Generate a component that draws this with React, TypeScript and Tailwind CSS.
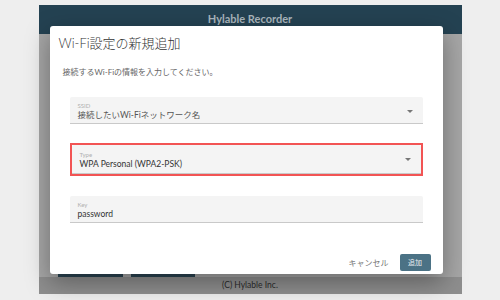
const font = "font-['Lato','Noto_Sans_CJK_JP',sans-serif]";

function Field({
  label,
  value,
  select,
  dark,
  tall,
}: {
  label: string;
  value: string;
  select?: boolean;
  dark?: boolean;
  tall?: boolean;
}) {
  return (
    <div
      className={`relative ${tall ? "h-[29px]" : "h-[27px]"} bg-[#f4f4f4] border-b border-[#c9c9c9] rounded-t-[2px] pl-[8px] pt-[2px] flex flex-col justify-center`}
    >
      <div className="text-[6px] leading-[7px] text-[#b0b0b0]">{label}</div>
      <div className={`text-[8.5px] leading-[12px] ${dark ? "text-[#333]" : "text-[#555]"}`}>
        {value}
      </div>
      {select && (
        <svg className="absolute right-[10px] top-[13px]" width="6" height="3" viewBox="0 0 6 3">
          <path d="M0 0h6L3 3z" fill="#777" />
        </svg>
      )}
    </div>
  );
}

export default function App() {
  return (
    <div className={`w-[500px] h-[300px] bg-[#eeeeee] flex justify-center pt-[5px] ${font}`}>
      <div className="relative w-[423px] h-[289px] flex flex-col">
        <div className="h-[29px] bg-[#244252] flex items-center justify-center">
          <span className="text-[11px] font-bold text-[#aab6bd]">Hylable Recorder</span>
        </div>
        <div className="flex-1 bg-[#a6a6a6] flex items-end pl-[19px] gap-[8px]">
          <div className="w-[65px] h-[14px] bg-[#2b4452]" />
          <div className="w-[64px] h-[14px] bg-[#2b4452]" />
        </div>
        <div className="h-[17px] bg-[#8e8e8e] flex items-center justify-center">
          <span className="text-[8.5px] text-[#2a2a2a]">(C) Hylable Inc.</span>
        </div>

        <div className="absolute left-[11px] top-[21px] w-[393px] h-[248px] bg-white rounded-[3px] shadow-[0_8px_24px_rgba(0,0,0,0.35)] flex flex-col">
          <div className="pl-[9px] pt-[8px] text-[13px] leading-[18px] font-light text-[#333]">
            Wi-Fi設定の新規追加
          </div>
          <div className="pl-[13px] mt-[15px] text-[8px] leading-[10px] text-[#666]">
            接続するWi-Fiの情報を入力してください。
          </div>
          <div className="px-[20px] mt-[20px] flex flex-col">
            <Field label="SSID" value="接続したいWi-Fiネットワーク名" select />
            <div className="mt-[19px] border-2 border-[#f25454]">
              <Field label="Type" value="WPA Personal (WPA2-PSK)" select dark tall />
            </div>
            <div className="mt-[20px]">
              <Field label="Key" value="password" dark />
            </div>
          </div>
          <div className="mt-[31px] pr-[12px] flex justify-end items-center gap-[11px]">
            <span className="text-[8px] text-[#777]">キャンセル</span>
            <div className="w-[31px] h-[17px] bg-[#4b7285] rounded-[2px] flex items-center justify-center text-[7px] text-[#e8eef1]">
              追加
            </div>
          </div>
        </div>
      </div>
    </div>
  );
}
